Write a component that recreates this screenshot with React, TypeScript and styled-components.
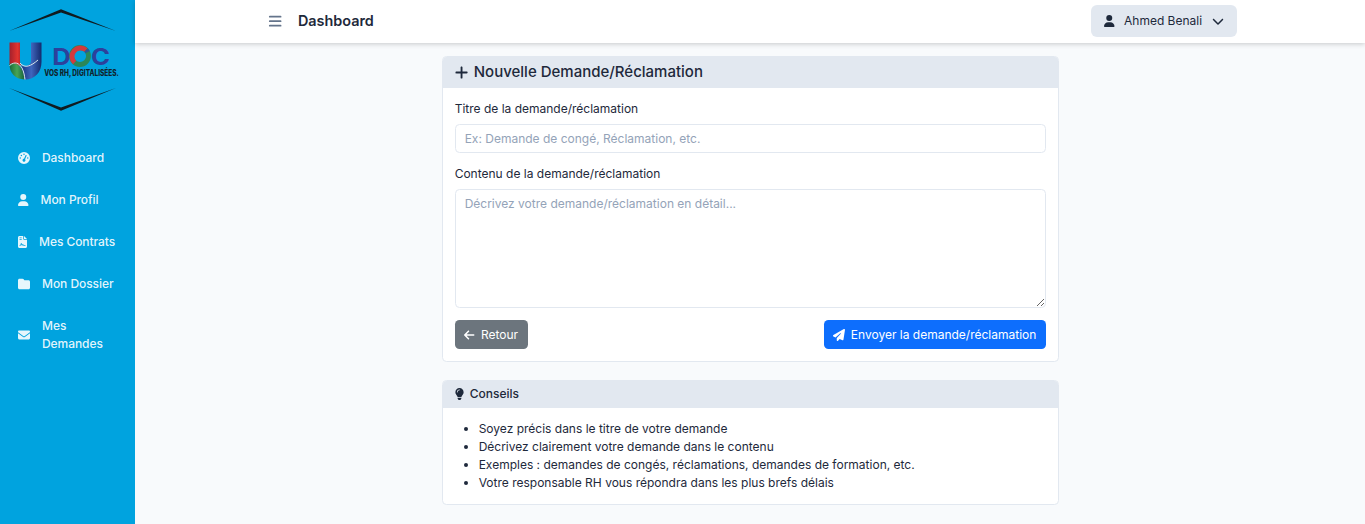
import React from "react";
import styled, { createGlobalStyle } from "styled-components";
import {
  FaGaugeHigh, FaUser, FaFileContract, FaFolder, FaEnvelope, FaBars,
  FaPlus, FaArrowLeft, FaPaperPlane, FaLightbulb, FaChevronDown,
} from "react-icons/fa6";

const Global = createGlobalStyle`
  *, *::before, *::after { box-sizing: border-box; }
  html { font-size: 12px; }
  body {
    margin: 0;
    font-family: Inter, "Liberation Sans", sans-serif;
    font-size: 12px;
    line-height: 1.5;
    color: #1e293b;
    background: #f8fafc;
    overflow: hidden;
  }
  svg { flex: none; }
`;

const Shell = styled.div`
  display: flex;
  height: 524px;
`;
const Sidebar = styled.aside`
  width: 135px;
  flex: none;
  background: #00a3df;
`;
const Logo = styled.svg`
  display: block;
  width: 135px;
  height: 120px;
`;
const Nav = styled.nav`
  display: flex;
  flex-direction: column;
  gap: 6px;
  padding: 20px 9px 0;
`;
const NavLink = styled.a`
  display: flex;
  align-items: center;
  gap: 12px;
  padding: 9px;
  font-weight: 500;
  letter-spacing: -0.06px;
  color: rgba(255, 255, 255, 0.9);
`;
const Main = styled.div`
  flex: 1;
  min-width: 0;
`;
const Topbar = styled.header`
  position: relative;
  display: flex;
  align-items: center;
  height: 43px;
  padding: 0 128px 1px 133px;
  background: #fff;
  box-shadow: 0 1px 5px rgba(0, 0, 0, 0.2);
`;
const PageTitle = styled.h1`
  flex: 1;
  margin: 0 0 0 15.5px;
  font-size: 14.4px;
  font-weight: 600;
  line-height: 1.2;
`;
const UserButton = styled.button`
  display: flex;
  align-items: center;
  height: 32px;
  width: 146px;
  padding: 0 13px;
  border: 0;
  border-radius: 6px;
  background: #e2e8f0;
  color: #1e293b;
  font: inherit;
  span { margin: 0 auto 0 9.5px; }
`;
const Content = styled.main`
  display: flex;
  flex-direction: column;
  gap: 18px;
  width: 617px;
  margin: 13px 0 0 306.67px;
`;
const Card = styled.section`
  background: #fff;
  border: 1px solid #e2e8f0;
  border-radius: 4.5px;
  overflow: hidden;
`;
const CardHeader = styled.header<{ $large?: boolean }>`
  display: flex;
  align-items: center;
  gap: 6px;
  padding: 6px 12px;
  border-bottom: 1px solid #e2e8f0;
  background: #e2e8f0;
  font-size: ${(p) => (p.$large ? 15 : 12)}px;
  font-weight: 500;
  line-height: 1.2;
`;
const CardBody = styled.div`
  padding: 12px;
`;
const Field = styled.div`
  margin-bottom: 12px;
`;
const Label = styled.label`
  display: block;
  margin-bottom: 6px;
`;
const Input = styled.input`
  display: block;
  width: 100%;
  height: 29px;
  padding: 4.5px 9px;
  border: 1px solid #e2e8f0;
  border-radius: 4.5px;
  background: #fff;
  color: #1e293b;
  font: inherit;
  outline: 0;
  &::placeholder { color: #94a3b8; opacity: 1; }
`;
const TextArea = styled(Input)`
  height: 119px;
  resize: vertical;
`;
const Actions = styled.div`
  display: flex;
  justify-content: space-between;
`;
const Button = styled.button<{ $primary?: boolean }>`
  display: flex;
  align-items: center;
  gap: 6px;
  height: 29px;
  padding: 0 ${(p) => (p.$primary ? 9.3 : 9.8)}px;
  border: 0;
  border-radius: 4.5px;
  background: ${(p) => (p.$primary ? "#0d6efd" : "#6c757d")};
  color: #fff;
  font: inherit;
`;
const Tips = styled.ul`
  margin: 0;
  padding-left: 24px;
`;

const LINKS = [
  { icon: FaGaugeHigh, label: "Dashboard", width: 12 },
  { icon: FaUser, label: "Mon Profil", width: 10.5 },
  { icon: FaFileContract, label: "Mes Contrats", width: 9 },
  { icon: FaFolder, label: "Mon Dossier", width: 12 },
  { icon: FaEnvelope, label: "Mes Demandes", width: 12 },
];

const TIPS = [
  "Soyez précis dans le titre de votre demande",
  "Décrivez clairement votre demande dans le contenu",
  "Exemples : demandes de congés, réclamations, demandes de formation, etc.",
  "Votre responsable RH vous répondra dans les plus brefs délais",
];

function Brand() {
  return (
    <Logo viewBox="0 0 135 120">
      <defs>
        <linearGradient id="red" x1="0" x2="1">
          <stop offset="0" stopColor="#a3202c" />
          <stop offset=".6" stopColor="#e2342f" />
          <stop offset="1" stopColor="#9c1c27" />
        </linearGradient>
        <linearGradient id="blue" x1="0" x2="1">
          <stop offset="0" stopColor="#17317e" />
          <stop offset=".5" stopColor="#3f66bd" />
          <stop offset="1" stopColor="#142a6d" />
        </linearGradient>
        <linearGradient id="green" x1="0" x2="1">
          <stop offset="0" stopColor="#186c3a" />
          <stop offset=".5" stopColor="#48a454" />
          <stop offset="1" stopColor="#17633e" />
        </linearGradient>
      </defs>
      <path d="M9 31 61 9.3 116 31 61 12.5Z M9 88 61 107.5 116 88 61 110.7Z" fill="#101b20" />
      <path d="M9.5 42.5H20V61C20 64 21 66 23 67L17 65 9.5 65Z" fill="url(#red)" />
      <path d="M31 42.5H41.5V62C41.5 72 35 79.5 25 79.5L22 74 21 66C28 67 31 65 31 60Z" fill="url(#blue)" />
      <path d="M9.5 64C14 62 18 64 21 68C23 71 24 75 24.5 79.5C15 79 9.5 73 9.5 64Z" fill="url(#green)" />
      <path d="M9.5 65.5C15 61 19 63 22 68C24 72 24.5 76 25 79.5M20 63C25 69 31 66 38 60" fill="none" stroke="#d7e6ea" strokeWidth="1" />
      <text x="52.3" y="65" fontFamily="Inter, sans-serif" fontSize="23" fontWeight="700" fill="#2c419c" textLength="18.5" lengthAdjust="spacingAndGlyphs">D</text>
      <g fill="none" strokeWidth="4.8">
        <circle cx="80" cy="56" r="8.5" stroke="#2b8759" />
        <path d="M74.6 62.6A8.5 8.5 0 0 1 86 50" stroke="#d33a3d" />
        <path d="M86 50A8.5 8.5 0 0 1 87.6 52.2" stroke="#2c5797" />
      </g>
      <text x="91" y="65" fontFamily="Inter, sans-serif" fontSize="23" fontWeight="700" fill="#2c419c" textLength="19" lengthAdjust="spacingAndGlyphs">C</text>
      <text x="44.3" y="75.7" fontFamily="Inter, sans-serif" fontSize="8.4" fontWeight="800" fill="#10232c" textLength="74.5" lengthAdjust="spacingAndGlyphs">VOS RH, DIGITALISÉES.</text>
    </Logo>
  );
}

export default function App() {
  return (
    <>
      <Global />
      <Shell>
        <Sidebar>
          <Brand />
          <Nav>
            {LINKS.map(({ icon: Icon, label, width }) => (
              <NavLink key={label}>
                <Icon width={width} height={12} style={{ width }} />
                <span>{label}</span>
              </NavLink>
            ))}
          </Nav>
        </Sidebar>
        <Main>
          <Topbar>
            <FaBars size={14.4} color="#64748b" />
            <PageTitle>Dashboard</PageTitle>
            <UserButton>
              <FaUser width={10.5} height={12} style={{ width: 10.5 }} />
              <span>Ahmed Benali</span>
              <FaChevronDown size={12} />
            </UserButton>
          </Topbar>
          <Content>
            <Card>
              <CardHeader $large>
                <FaPlus width={13.1} height={15} style={{ width: 13.1 }} />
                Nouvelle Demande/Réclamation
              </CardHeader>
              <CardBody>
                <Field>
                  <Label htmlFor="titre">Titre de la demande/réclamation</Label>
                  <Input id="titre" placeholder="Ex: Demande de congé, Réclamation, etc." />
                </Field>
                <Field>
                  <Label htmlFor="contenu">Contenu de la demande/réclamation</Label>
                  <TextArea as="textarea" id="contenu" placeholder="Décrivez votre demande/réclamation en détail..." />
                </Field>
                <Actions>
                  <Button>
                    <FaArrowLeft width={10.5} height={12} style={{ width: 10.5 }} />
                    Retour
                  </Button>
                  <Button $primary>
                    <FaPaperPlane size={12} />
                    Envoyer la demande/réclamation
                  </Button>
                </Actions>
              </CardBody>
            </Card>
            <Card>
              <CardHeader>
                <FaLightbulb width={9} height={12} style={{ width: 9 }} />
                Conseils
              </CardHeader>
              <CardBody>
                <Tips>
                  {TIPS.map((tip) => <li key={tip}>{tip}</li>)}
                </Tips>
              </CardBody>
            </Card>
          </Content>
        </Main>
      </Shell>
    </>
  );
}
